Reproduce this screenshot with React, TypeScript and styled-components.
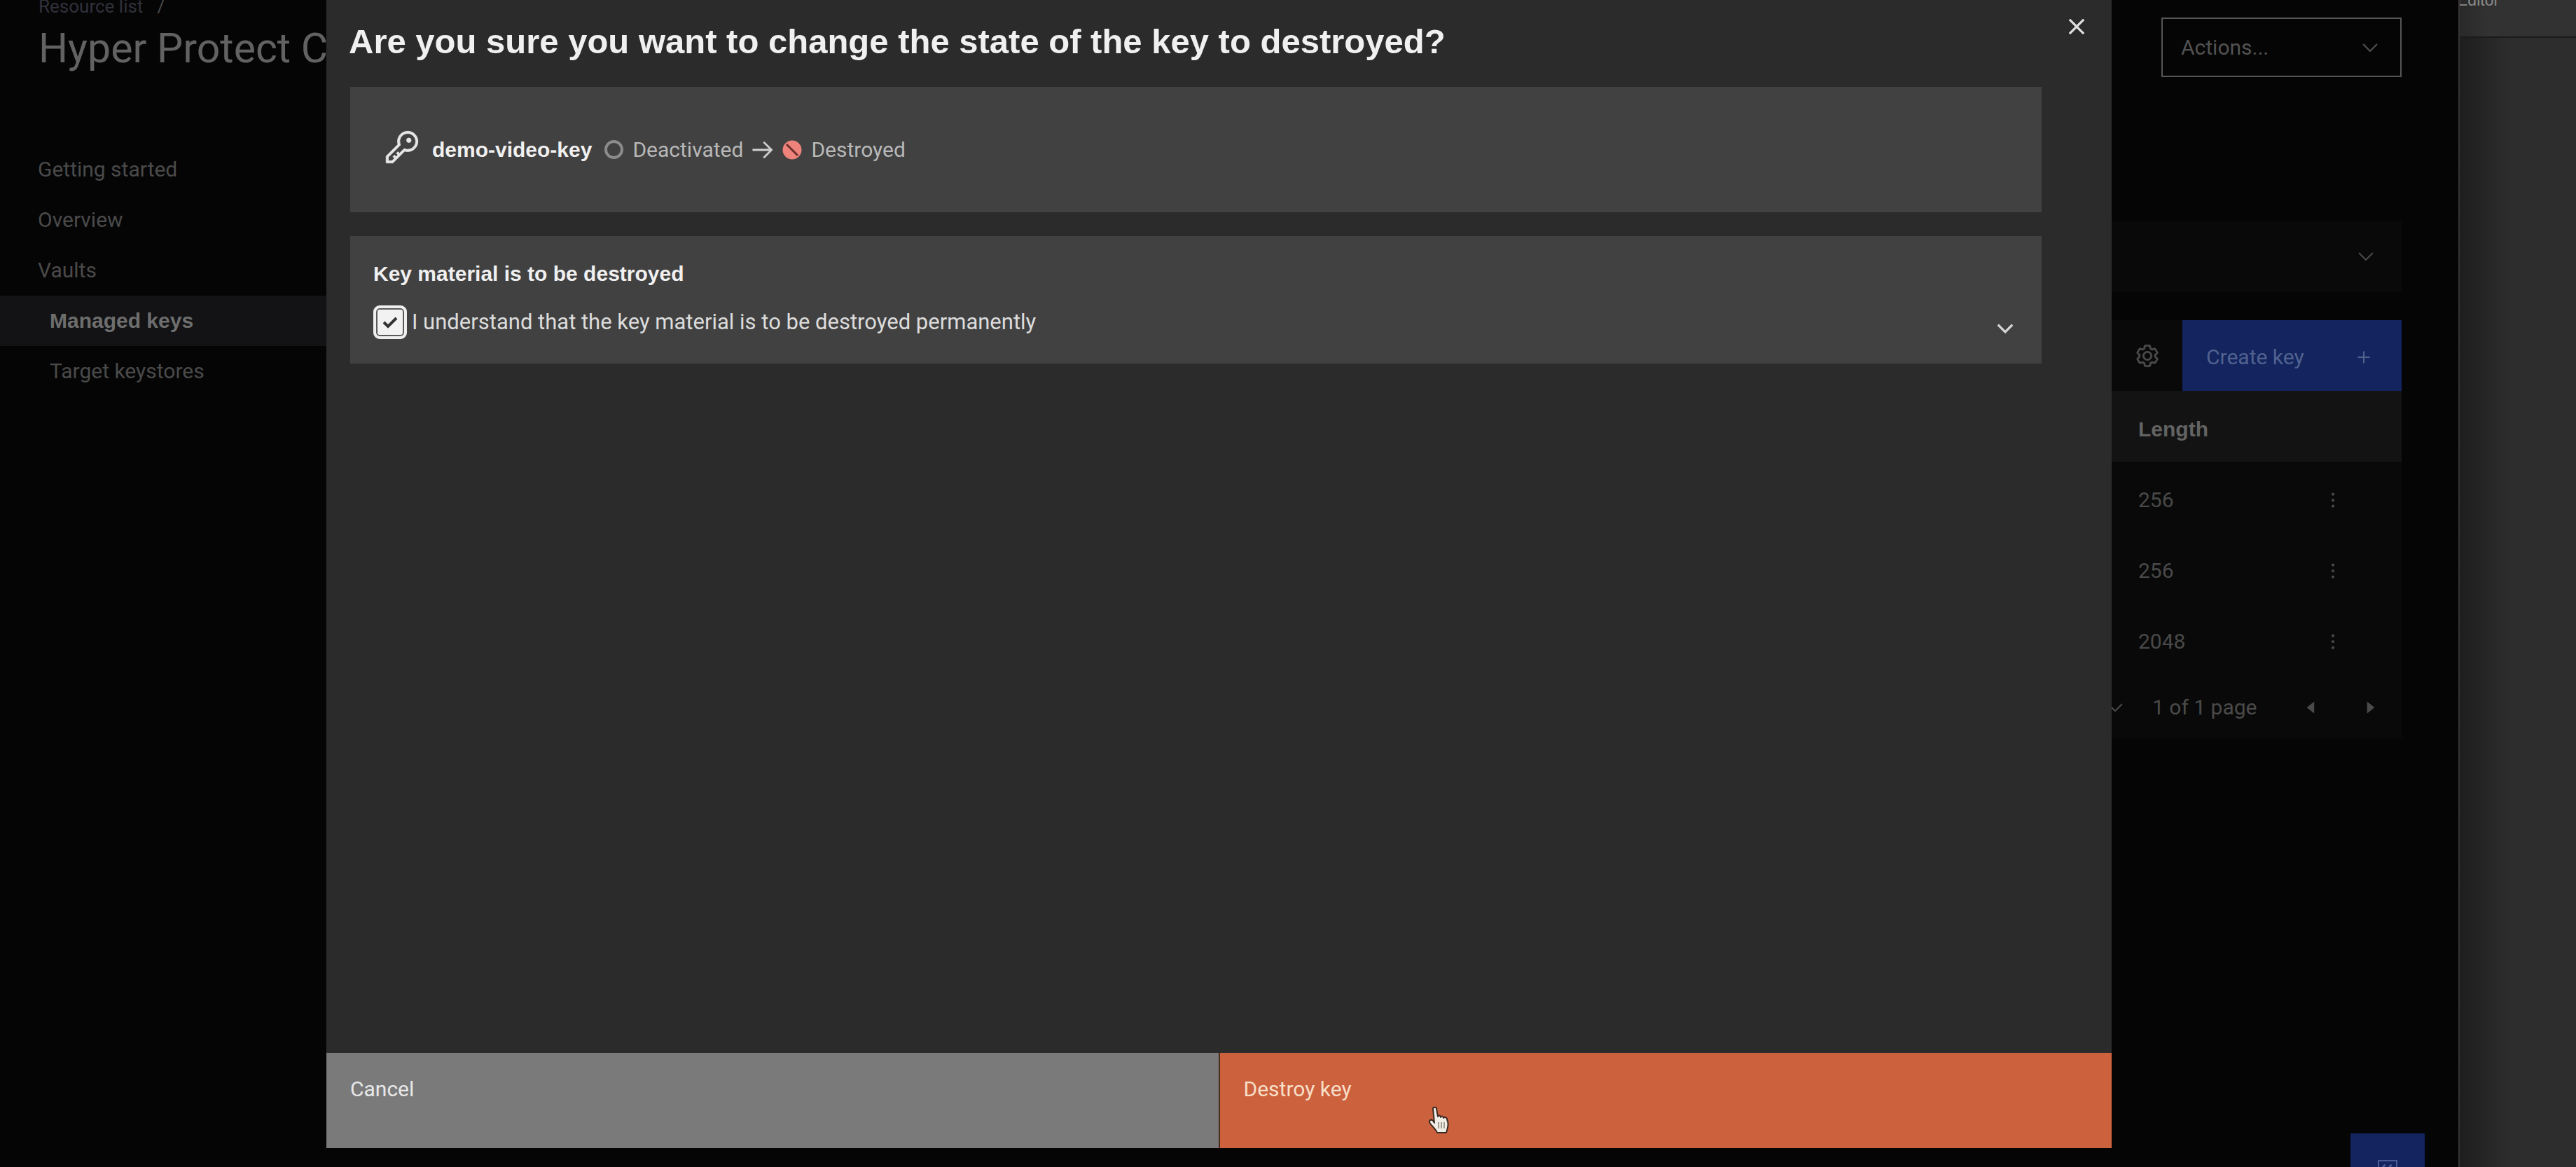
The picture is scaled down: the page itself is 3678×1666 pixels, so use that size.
import React, { useState } from 'react';
import styled, { createGlobalStyle } from 'styled-components';

const GlobalStyle = createGlobalStyle`
  *, *::before, *::after { box-sizing: border-box; }
  body { margin: 0; background: #050505; }
  button, select, input { font: inherit; color: inherit; margin: 0; }
`;

const heading = '"Liberation Sans", Arial, sans-serif';

/* ---------- shell ---------- */

const Desktop = styled.div`
  display: flex;
  height: 100vh;
  overflow: hidden;
  font-family: Roboto, "Liberation Sans", sans-serif;
  font-size: 30px;
  line-height: 36px;
`;

const AppWindow = styled.div`
  position: relative;
  flex: 1;
  min-width: 0;
  overflow: hidden;
  background: #050505;
  border-right: 2px solid #343434;
`;

const BackWindow = styled.aside`
  display: flex;
  flex-direction: column;
  width: 166px;
  overflow: hidden;
  background: linear-gradient(90deg, #1e1e1e 0, #242424 30px, #2d2d2d 72px);
`;

const BackWindowBar = styled.div`
  height: 54px;
  background: linear-gradient(90deg, #292929 0, #323232 40px);
  border-bottom: 2px solid #1b1b1b;
  color: #8a8a8a;
  font: 23px/28px ${heading};
`;

const BackWindowTitle = styled.div`
  margin: -14px 0 0 -4px;
`;

/* ---------- page ---------- */

const PageHeader = styled.header`
  display: flex;
  justify-content: space-between;
  align-items: flex-end;
  height: 110px;
  padding: 0 81px 0 55px;
`;

const Breadcrumb = styled.nav`
  display: flex;
  gap: 20px;
  font-size: 26px;
  line-height: 18px;
  color: #4a4a4a;
`;

const BreadcrumbLink = styled.a`
  color: #31313b;
  text-decoration: none;
`;

const PageTitle = styled.h1`
  margin: 11px 0 1px;
  font-size: 59px;
  font-weight: 400;
  line-height: 80px;
  color: #626262;
  white-space: nowrap;
`;

const ActionsField = styled.div`
  display: grid;
  align-items: center;
  width: 343px;
  height: 85px;
  color: #525252;

  & > * { grid-area: 1 / 1; }
  & > svg { justify-self: end; margin-right: 28px; pointer-events: none; }
`;

const ActionsSelect = styled.select`
  width: 100%;
  height: 100%;
  padding: 0 26px;
  appearance: none;
  background: transparent;
  border: 2px solid #555;
  border-radius: 0;
`;

const PageBody = styled.div`
  display: grid;
  grid-template-columns: 466px 1fr 438px;
  padding-right: 81px;
`;

const SideNav = styled.nav`
  display: flex;
  flex-direction: column;
  padding-top: 96px;
`;

const NavLink = styled.a<{ $nested?: boolean; $active?: boolean }>`
  padding-left: ${p => (p.$nested ? 71 : 54)}px;
  line-height: 72px;
  text-decoration: none;
  color: ${p => (p.$active ? '#6e6e6e' : '#4a4a4a')};
  background: ${p => (p.$active ? '#131315' : 'transparent')};
  font-family: ${p => (p.$active ? heading : 'inherit')};
  font-weight: ${p => (p.$active ? 700 : 400)};
`;

const Main = styled.main`
  grid-column: 3;
  padding-top: 205px;
`;

const FilterTile = styled.section`
  display: flex;
  align-items: center;
  justify-content: flex-end;
  height: 102px;
  margin-bottom: 40px;
  padding-right: 25px;
  background: #090909;
  color: #4a4a4a;
`;

const IconButton = styled.button<{ $w?: number; $h?: number }>`
  display: inline-flex;
  align-items: center;
  justify-content: center;
  width: ${p => p.$w ?? 52}px;
  height: ${p => p.$h ?? 52}px;
  padding: 0;
  background: none;
  border: 0;
`;

const Toolbar = styled.div`
  display: flex;
  justify-content: flex-end;
  background: #090909;
  color: #4c4c4c;
`;

const CreateButton = styled.button`
  display: flex;
  align-items: center;
  justify-content: space-between;
  width: 313px;
  height: 101px;
  padding: 4px 37px 0 34px;
  background: #13245f;
  border: 0;
  color: #51628f;
`;

const KeysTable = styled.table`
  width: 100%;
  border-collapse: collapse;
  background: #090909;
  color: #494949;

  th, td { height: 101px; padding: 8px 0 0 62px; text-align: left; }
  th { background: #131313; color: #636363; font-family: ${heading}; }
  th:last-child, td:last-child { width: 196px; padding-left: 0; text-align: center; }
  td:last-child > * { vertical-align: middle; }
`;

const Pagination = styled.div`
  display: flex;
  align-items: center;
  height: 92px;
  padding: 4px 3px 0 12px;
  background: #090909;
  color: #4a4a4a;
`;

const PageCount = styled.span`
  margin: 0 auto 0 36px;
`;

const ChatButton = styled.button`
  position: absolute;
  right: 48px;
  bottom: -58px;
  display: flex;
  align-items: center;
  justify-content: center;
  width: 106px;
  height: 106px;
  padding: 0;
  background: #13245f;
  border: 0;
  color: #4a5c92;
`;

/* ---------- dialog ---------- */

const Overlay = styled.div`
  position: absolute;
  inset: 0;
  display: flex;
  padding: 0 495px 27px 466px;
`;

const Dialog = styled.div`
  display: flex;
  flex: 1;
  flex-direction: column;
  min-width: 0;
  background: #2b2b2b;
  color: #dcdcdc;
`;

const DialogHeader = styled.header`
  display: flex;
  justify-content: space-between;
  align-items: flex-start;
  height: 124px;
  padding-left: 32px;
`;

const DialogTitle = styled.h2`
  margin: 27px 0 0;
  font: 700 49px/64px ${heading};
  color: #f0f0f0;
`;

const DialogBody = styled.div`
  display: flex;
  flex: 1;
  flex-direction: column;
  gap: 34px;
  padding: 0 100px 0 34px;
`;

const KeyCard = styled.section`
  display: flex;
  align-items: center;
  height: 179px;
  padding-left: 48px;
  background: #414141;
  color: #b8b8b8;
`;

const KeyGlyph = styled.span`
  display: flex;
  margin: 0 17px 8px 0;
  color: #e6e6e6;
`;

const KeyName = styled.strong`
  margin-right: 18px;
  font-family: ${heading};
  color: #f0f0f0;
`;

const Status = styled.span`
  display: flex;
  align-items: center;
  gap: 13px;
`;

const Arrow = styled.span`
  display: flex;
  margin: 0 9px;
  color: #d0d0d0;
`;

const ConfirmCard = styled.section`
  display: flex;
  justify-content: space-between;
  align-items: flex-end;
  padding: 36px 26px 35px 33px;
  background: #414141;
`;

const ConfirmTitle = styled.h3`
  margin: 0 0 27px;
  font: 700 30px/36px ${heading};
  color: #f0f0f0;
`;

const CheckRow = styled.label`
  display: flex;
  align-items: center;
  gap: 7px;
  font-size: 31px;
`;

const CheckBox = styled.span`
  display: grid;
  place-items: center;
  width: 48px;
  height: 48px;

  & > * { grid-area: 1 / 1; }
  & > svg { pointer-events: none; }
`;

const CheckInput = styled.input`
  width: 48px;
  height: 48px;
  appearance: none;
  background: #f2f2f2;
  border: 4px solid #efefef;
  border-radius: 9px;
  box-shadow: inset 0 0 0 2px #5a5a5a;
`;

const ExpandSlot = styled.div`
  display: flex;
  color: #d8d8d8;
`;

const DialogFooter = styled.footer`
  display: flex;
  height: 136px;
`;

const FooterButton = styled.button<{ $danger?: boolean }>`
  position: relative;
  display: flex;
  flex: 1;
  align-items: flex-start;
  padding: 34px;
  border: 0;
  border-left: ${p => (p.$danger ? '2px solid #4a2a1e' : '0')};
  background: ${p => (p.$danger ? '#cc613e' : '#7a7a7a')};
  color: ${p => (p.$danger ? '#f8dfc8' : '#e8e8e8')};
`;

const Pointer = styled.svg`
  position: absolute;
  left: 294px;
  top: 76px;
`;

/* ---------- icons ---------- */

const paths = {
  chevron: 'M16 22L6 12l1.4-1.4 8.6 8.6 8.6-8.6L26 12z',
  close:
    'M17.4141 16L24 9.4141 22.5859 8 16 14.5859 9.4143 8 8 9.4141 14.5859 16 8 22.5859 9.4143 24 16 17.4141 22.5859 24 24 22.5859z',
  add: 'M17 15V8h-2v7H8v2h7v7h2v-7h7v-2z',
  arrow: 'M18 6L16.57 7.393 24.15 15H4v2h20.15l-7.58 7.573L18 26 28 16z',
  caretLeft: 'M20 24L10 16 20 8z',
  caretRight: 'M12 8L22 16 12 24z',
  dots: 'M14 8a2 2 0 1 0 4 0a2 2 0 1 0-4 0M14 16a2 2 0 1 0 4 0a2 2 0 1 0-4 0M14 24a2 2 0 1 0 4 0a2 2 0 1 0-4 0',
  key: 'M21,2a8.9977,8.9977,0,0,0-8.6119,11.6118L2,24v6H8L18.3881,19.6118A9,9,0,1,0,21,2Zm0,16a7.0125,7.0125,0,0,1-2.0322-.3022L17.821,17.35l-.8472.8472-3.1811,3.1812L12.4141,20,11,21.4141l1.3787,1.3786-1.5859,1.586L9.4141,23,8,24.4141l1.3787,1.3786L7.1716,28H4V24.8284l9.8023-9.8023.8472-.8474-.3473-1.1467A7,7,0,1,1,21,18ZM20 10a2 2 0 1 0 4 0a2 2 0 1 0-4 0',
  gear: 'M27,16.76c0-.25,0-.5,0-.76s0-.51,0-.77l1.92-1.68A2,2,0,0,0,29.3,11L26.94,7a2,2,0,0,0-1.73-1,2,2,0,0,0-.64.1l-2.43.82a11.35,11.35,0,0,0-1.31-.75l-.51-2.52a2,2,0,0,0-2-1.61H13.64a2,2,0,0,0-2,1.61l-.51,2.52a11.48,11.48,0,0,0-1.32.75L7.43,6.06A2,2,0,0,0,6.79,6,2,2,0,0,0,5.06,7L2.7,11a2,2,0,0,0,.41,2.51L5,15.24c0,.25,0,.5,0,.76s0,.51,0,.77L3.11,18.45A2,2,0,0,0,2.7,21L5.06,25a2,2,0,0,0,1.73,1,2,2,0,0,0,.64-.1l2.43-.82a11.35,11.35,0,0,0,1.31.75l.51,2.52a2,2,0,0,0,2,1.61h4.72a2,2,0,0,0,2-1.61l.51-2.52a11.48,11.48,0,0,0,1.32-.75l2.42.82a2,2,0,0,0,.64.1,2,2,0,0,0,1.73-1L29.3,21a2,2,0,0,0-.41-2.51ZM25.21,24l-3.43-1.16a8.86,8.86,0,0,1-2.71,1.57L18.36,28H13.64l-.71-3.55a9.36,9.36,0,0,1-2.7-1.57L6.79,24,4.43,20l2.72-2.4a8.9,8.9,0,0,1,0-3.13L4.43,12,6.79,8l3.43,1.16a8.86,8.86,0,0,1,2.71-1.57L13.64,4h4.72l.71,3.55a9.36,9.36,0,0,1,2.7,1.57L25.21,8,27.57,12l-2.72,2.4a8.9,8.9,0,0,1,0,3.13L27.57,20ZM16,22a6,6,0,1,1,6-6A5.94,5.94,0,0,1,16,22Zm0-10a3.91,3.91,0,0,0-4,4,3.91,3.91,0,0,0,4,4,3.91,3.91,0,0,0,4-4A3.91,3.91,0,0,0,16,12Z',
};

function Icon({ name, size = 34, bold = 0 }: { name: keyof typeof paths; size?: number; bold?: number }) {
  return (
    <svg width={size} height={size} viewBox="0 0 32 32" fill="currentColor" stroke="currentColor" strokeWidth={bold} aria-hidden="true">
      <path d={paths[name]} />
    </svg>
  );
}

const navItems = [
  { label: 'Getting started' },
  { label: 'Overview' },
  { label: 'Vaults' },
  { label: 'Managed keys', nested: true, active: true },
  { label: 'Target keystores', nested: true },
];

const keyLengths = [256, 256, 2048];

function DestroyKeyDialog() {
  const [confirmed, setConfirmed] = useState(true);
  return (
    <Overlay>
      <Dialog role="dialog" aria-modal="true" aria-labelledby="dialog-title">
        <DialogHeader>
          <DialogTitle id="dialog-title">Are you sure you want to change the state of the key to destroyed?</DialogTitle>
          <IconButton $w={100} $h={76} aria-label="Close">
            <Icon name="close" size={44} bold={0.5} />
          </IconButton>
        </DialogHeader>
        <DialogBody>
          <KeyCard>
            <KeyGlyph><Icon name="key" size={52} bold={0.5} /></KeyGlyph>
            <KeyName>demo-video-key</KeyName>
            <Status>
              <svg width="27" height="27" viewBox="0 0 27 27" aria-hidden="true">
                <circle cx="13.5" cy="13.5" r="11.5" fill="none" stroke="#8c8c8c" strokeWidth="4" />
              </svg>
              Deactivated
            </Status>
            <Arrow><Icon name="arrow" size={38} bold={0.5} /></Arrow>
            <Status>
              <svg width="28" height="28" viewBox="0 0 28 28" aria-hidden="true">
                <circle cx="14" cy="14" r="13.5" fill="#ee837b" />
                <path d="M6 6l16 16" stroke="#6b2f2a" strokeWidth="3" />
              </svg>
              Destroyed
            </Status>
          </KeyCard>
          <ConfirmCard>
            <div>
              <ConfirmTitle>Key material is to be destroyed</ConfirmTitle>
              <CheckRow htmlFor="confirm-destroy">
                <CheckBox>
                  <CheckInput id="confirm-destroy" type="checkbox" checked={confirmed} onChange={e => setConfirmed(e.target.checked)} />
                  {confirmed && (
                    <svg width="24" height="24" viewBox="0 0 24 24" fill="none" stroke="#333" strokeWidth="4" aria-hidden="true">
                      <path d="M3 12l6 6L21 6" />
                    </svg>
                  )}
                </CheckBox>
                I understand that the key material is to be destroyed permanently
              </CheckRow>
            </div>
            <ExpandSlot>
              <IconButton aria-label="Expand" $h={30}><Icon name="chevron" bold={1} /></IconButton>
            </ExpandSlot>
          </ConfirmCard>
        </DialogBody>
        <DialogFooter>
          <FooterButton>Cancel</FooterButton>
          <FooterButton $danger>
            Destroy key
            <Pointer width="36" height="40" viewBox="0 0 36 40" aria-hidden="true">
              <path
                d="M10 4c0-3 5-3 5 0l2 11c0-2 4-2 4 1c0-2 4-2 4 1c1-2 5-1 5 2c3 7 1 12-1 19h-13c-2-5-6-8-10-13c-3-4 1-7 4-4l2 3z"
                fill="#f0ede6"
                stroke="#3b2a22"
                strokeWidth="2"
                strokeLinejoin="round"
              />
              <path d="M18 23v9M22 23v9M26 23v9" stroke="#8a8378" strokeWidth="1.5" />
            </Pointer>
          </FooterButton>
        </DialogFooter>
      </Dialog>
    </Overlay>
  );
}

export default function App() {
  return (
    <Desktop>
      <GlobalStyle />
      <AppWindow>
        <PageHeader>
          <div>
            <Breadcrumb aria-label="Breadcrumb">
              <BreadcrumbLink href="#resources">Resource list</BreadcrumbLink>
              <span>/</span>
            </Breadcrumb>
            <PageTitle>Hyper Protect C</PageTitle>
          </div>
          <ActionsField>
            <ActionsSelect aria-label="Actions"><option>Actions...</option></ActionsSelect>
            <Icon name="chevron" />
          </ActionsField>
        </PageHeader>
        <PageBody>
          <SideNav aria-label="Service">
            {navItems.map(item => (
              <NavLink key={item.label} href="#nav" $nested={item.nested} $active={item.active}>{item.label}</NavLink>
            ))}
          </SideNav>
          <Main>
            <FilterTile>
              <IconButton aria-label="Expand filters"><Icon name="chevron" /></IconButton>
            </FilterTile>
            <Toolbar>
              <IconButton $w={101} $h={101} aria-label="Settings"><Icon name="gear" size={36} bold={0.5} /></IconButton>
              <CreateButton>Create key<Icon name="add" /></CreateButton>
            </Toolbar>
            <KeysTable>
              <thead>
                <tr><th scope="col">Length</th><th aria-label="Row actions" /></tr>
              </thead>
              <tbody>
                {keyLengths.map((length, i) => (
                  <tr key={i}>
                    <td>{length}</td>
                    <td><IconButton aria-label="Row menu"><Icon name="dots" /></IconButton></td>
                  </tr>
                ))}
              </tbody>
            </KeysTable>
            <Pagination>
              <Icon name="chevron" />
              <PageCount>1 of 1 page</PageCount>
              <IconButton $w={84} aria-label="Previous page"><Icon name="caretLeft" /></IconButton>
              <IconButton $w={84} aria-label="Next page"><Icon name="caretRight" /></IconButton>
            </Pagination>
          </Main>
        </PageBody>
        <ChatButton aria-label="Chat">
          <svg width="30" height="30" viewBox="0 0 30 30" fill="none" stroke="currentColor" strokeWidth="2" aria-hidden="true">
            <path d="M15 28l4-7h9V1H2v20h9" />
            <path d="M9 13V9l3-2M18 13V9l3-2" strokeWidth="3" />
          </svg>
        </ChatButton>
        <DestroyKeyDialog />
      </AppWindow>
      <BackWindow>
        <BackWindowBar><BackWindowTitle>Editor</BackWindowTitle></BackWindowBar>
      </BackWindow>
    </Desktop>
  );
}
